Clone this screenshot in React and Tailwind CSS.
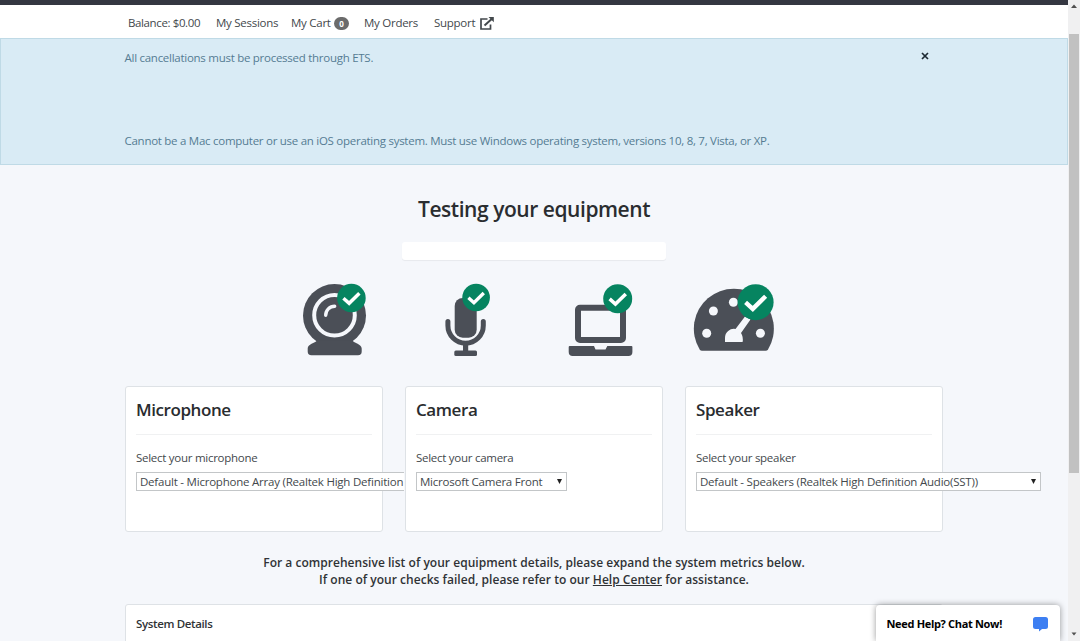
import React, { useState } from "react";

const devices = [
  {
    title: "Microphone",
    label: "Select your microphone",
    option: "Default - Microphone Array (Realtek High Definition",
    width: "w-[268px]",
    cut: true,
  },
  {
    title: "Camera",
    label: "Select your camera",
    option: "Microsoft Camera Front",
    width: "w-[151px]",
  },
  {
    title: "Speaker",
    label: "Select your speaker",
    option: "Default - Speakers (Realtek High Definition Audio(SST))",
    width: "w-[345px]",
  },
];

const Check = ({ cx, cy, r }) => {
  const k = r / 14;
  return (
    <g>
      <circle cx={cx} cy={cy} r={r} fill="#068460" />
      <path
        d={`M${cx - 7.8 * k} ${cy + 0.2 * k} l${5.6 * k} ${5 * k} l${10 * k} ${-9.8 * k}`}
        fill="none"
        stroke="#fff"
        strokeWidth={3.4 * k}
      />
    </g>
  );
};

const WebcamIcon = () => (
  <svg width="64" height="74" viewBox="303 283 64 74">
    <circle cx="334.5" cy="315.5" r="31.5" fill="#4b4f57" />
    <path
      d="M317 340.5H352.5C354 343 361.7 344 361.7 348.5V351.5Q361.7 355.3 358 355.3H311.5Q307.7 355.3 307.7 351.5V348.5C307.7 344 315 343 317 340.5Z"
      fill="#4b4f57"
    />
    <circle cx="334.5" cy="315.3" r="20.3" fill="none" stroke="#f5f7fb" strokeWidth="4" />
    <path
      d="M325.7 315.3A9 9 0 0 1 334.7 306.2"
      fill="none"
      stroke="#f5f7fb"
      strokeWidth="3.4"
      strokeLinecap="round"
    />
    <Check cx={351.4} cy={298} r={14.3} />
  </svg>
);

const MicIcon = () => (
  <svg width="46" height="74" viewBox="445 283 46 74">
    <rect x="454.7" y="298" width="22" height="39.7" rx="8" fill="#4b4f57" />
    <path
      d="M447.9 321.5V325.5A17.7 17.7 0 0 0 483.3 325.5V321.5"
      fill="none"
      stroke="#4b4f57"
      strokeWidth="5"
      strokeLinecap="round"
    />
    <rect x="463" y="344" width="5.2" height="8" fill="#4b4f57" />
    <rect x="454.3" y="350.6" width="22.7" height="5.4" rx="1.5" fill="#4b4f57" />
    <Check cx={476.1} cy={297.5} r={13.8} />
  </svg>
);

const LaptopIcon = () => (
  <svg width="65" height="74" viewBox="568 283 65 74">
    <rect x="578" y="307.7" width="45" height="32.3" rx="2" fill="none" stroke="#4b4f57" strokeWidth="6" />
    <path
      d="M568.7 347Q568.7 346 569.7 346H594L595.5 349.5H605.5L607.3 346H631.5Q632.4 346 632.4 347V352Q632.4 356 628.4 356H572.7Q568.7 356 568.7 352Z"
      fill="#4b4f57"
    />
    <Check cx={617.7} cy={298.7} r={14.5} />
  </svg>
);

const GaugeIcon = () => (
  <svg width="82" height="74" viewBox="693 283 82 74">
    <path
      d="M702 350.8Q700.5 350.8 699.7 349.5A40 40 0 1 1 768 349.5Q767.2 350.8 765.6 350.8Z"
      fill="#4b4f57"
    />
    <g fill="#f5f7fb">
      <circle cx="733.4" cy="302.3" r="4.5" />
      <circle cx="713.4" cy="311" r="4.5" />
      <circle cx="706.7" cy="333.2" r="4.5" />
      <circle cx="760.4" cy="333.2" r="4.5" />
      <path d="M725 342V338A9 9 0 0 1 735.5 329L745 316.5L750.5 319.5L741 333Q743.5 337 742.6 342Z" />
    </g>
    <Check cx={755.6} cy={302.2} r={18} />
  </svg>
);

const ExternalIcon = () => (
  <svg width="14" height="13" viewBox="0 0 14 13" className="mt-[2px]" fill="none" stroke="#43484c">
    <path d="M7.5 2H1V12H10.5V7.5" strokeWidth="1.7" />
    <path d="M4.500 8.500L12 1.800" strokeWidth="2" />
    <path d="M8.500 0H13.800V5.200Z" fill="#43484c" stroke="none" />
  </svg>
);

const DeviceCard = ({ title, label, option, width, cut }) => (
  <div className="h-[146px] w-[258px] shrink-0 rounded-[3px] border border-[#dee2e6] bg-white px-[10px]">
    <h2 className="mt-[10px] h-[26px] text-[17px] font-semibold leading-[26px] tracking-[-0.42px] text-[#292c2f]">
      {title}
    </h2>
    <hr className="mt-[11px] border-[#f0f1f2]" />
    <p className="mt-[14px] h-[17px] leading-[17px]">{label}</p>
    <div
      className={`mt-[6px] flex h-[19px] items-center justify-between border border-[#c3c6c8] bg-white pl-[3px] tracking-[-0.22px] ${width} ${
        cut ? "border-r-0" : "pr-[4px]"
      }`}
    >
      <span className="whitespace-nowrap">{option}</span>
      {!cut && (
        <svg width="5" height="5" viewBox="0 0 5 5">
          <path d="M0 0H5L2.500 5Z" fill="#222" />
        </svg>
      )}
    </div>
  </div>
);

export default function App() {
  const [showAlert, setShowAlert] = useState(true);

  return (
    <div className="relative flex h-[641px] w-[1080px] overflow-hidden bg-[#f5f7fb] font-['Open_Sans',sans-serif] text-[11.5px] tracking-[-0.27px] text-[#43484c]">
      <div className="flex w-[1068px] flex-col">
        <div className="h-[5px] shrink-0 bg-[#343741]" />
        <nav className="flex h-[33px] shrink-0 items-center bg-white pl-[128px] pt-[2px] whitespace-nowrap">
          <span className="w-[88px] tracking-[-0.38px]">Balance: $0.00</span>
          <span className="w-[75px]">My Sessions</span>
          <span className="w-[43px]">My Cart</span>
          <span className="mr-[15px] mt-[2px] flex h-[13px] w-[15px] items-center justify-center rounded-full bg-[#6b6b6b] text-[8px] font-bold text-white">
            0
          </span>
          <span className="w-[70px]">My Orders</span>
          <span className="w-[46px]">Support</span>
          <ExternalIcon />
        </nav>

        {showAlert && (
          <div className="flex h-[127px] shrink-0 justify-between border border-[#bfdae6] bg-[#d9ebf5] pl-[123.500px] text-[#557c93]">
            <div className="pt-[9.500px]">
              <p className="h-[17px] leading-[17px]">All cancellations must be processed through ETS.</p>
              <p className="mt-[66px] h-[17px] leading-[17px]">
                Cannot be a Mac computer or use an iOS operating system. Must use Windows operating system, versions 10, 8, 7, Vista, or XP.
              </p>
            </div>
            <button className="mr-[138px] mt-[13px] h-[8px] w-[8px]" onClick={() => setShowAlert(false)}>
              <svg width="8" height="8" viewBox="0 0 8 8">
                <path d="M1 1L7 7M7 1L1 7" stroke="#1d2a33" strokeWidth="1.700" />
              </svg>
            </button>
          </div>
        )}

        <main className="flex flex-col">
          <h1 className="mt-[28px] h-[32px] text-center text-[21px] font-semibold leading-[32px] tracking-[-0.45px] text-[#2a2d30]">
            Testing your equipment
          </h1>
          <div className="ml-[402px] mt-[17px] h-[18px] w-[264px] rounded-[3px] bg-white shadow-[0_1px_1px_rgba(0,0,0,0.06)]" />

          <div className="ml-[303px] mt-[23px] flex h-[74px]">
            <WebcamIcon />
            <div className="w-[78px]" />
            <MicIcon />
            <div className="w-[77px]" />
            <LaptopIcon />
            <div className="w-[60px]" />
            <GaugeIcon />
          </div>

          <div className="ml-[125px] mt-[29px] flex gap-[22px]">
            {devices.map((device) => (
              <DeviceCard key={device.title} {...device} />
            ))}
          </div>

          <div className="mt-[22px] text-center text-[12px] font-semibold leading-[17px] tracking-[0.03px] text-[#303336]">
            <p>For a comprehensive list of your equipment details, please expand the system metrics below.</p>
            <p>
              If one of your checks failed, please refer to our{" "}
              <a href="#" className="underline">
                Help Center
              </a>{" "}
              for assistance.
            </p>
          </div>

          <div className="ml-[125px] mt-[16px] h-[60px] w-[818px] rounded-[3px] border border-[#dee2e6] bg-white px-[10px] pt-[10px] font-semibold tracking-[-0.36px] text-[#303336]">
            System Details
          </div>
        </main>
      </div>

      <div className="flex w-[12px] flex-col items-center bg-[#f0f0f1]">
        <svg width="12" height="34" viewBox="0 0 12 34">
          <path d="M3 8L6 4.500L9 8Z" fill="#505050" />
        </svg>
        <div className="h-[439px] w-[10px] bg-[#c1c1c1]" />
        <svg width="12" height="12" viewBox="0 0 12 12" className="mb-[2px] mt-auto">
          <path d="M3.500 5.500L6 8.500L8.500 5.500Z" fill="#505050" />
        </svg>
      </div>

      <button className="absolute bottom-0 right-[20.500px] flex h-[36px] w-[184px] items-center justify-between rounded-t-[4px] bg-white pl-[11px] pr-[12px] pt-[2px] text-[11px] font-bold tracking-[-0.32px] text-black shadow-[0_0_6px_rgba(0,0,0,0.4)]">
        <span className="whitespace-nowrap">Need Help? Chat Now!</span>
        <svg width="15" height="15" viewBox="0 0 15 15">
          <path
            d="M2.500 0H12.500Q15 0 15 2.500V9.500Q15 12 12.500 12H9L6 14.500V12H2.500Q0 12 0 9.500V2.500Q0 0 2.500 0Z"
            fill="#3d7ff2"
          />
        </svg>
      </button>
    </div>
  );
}
